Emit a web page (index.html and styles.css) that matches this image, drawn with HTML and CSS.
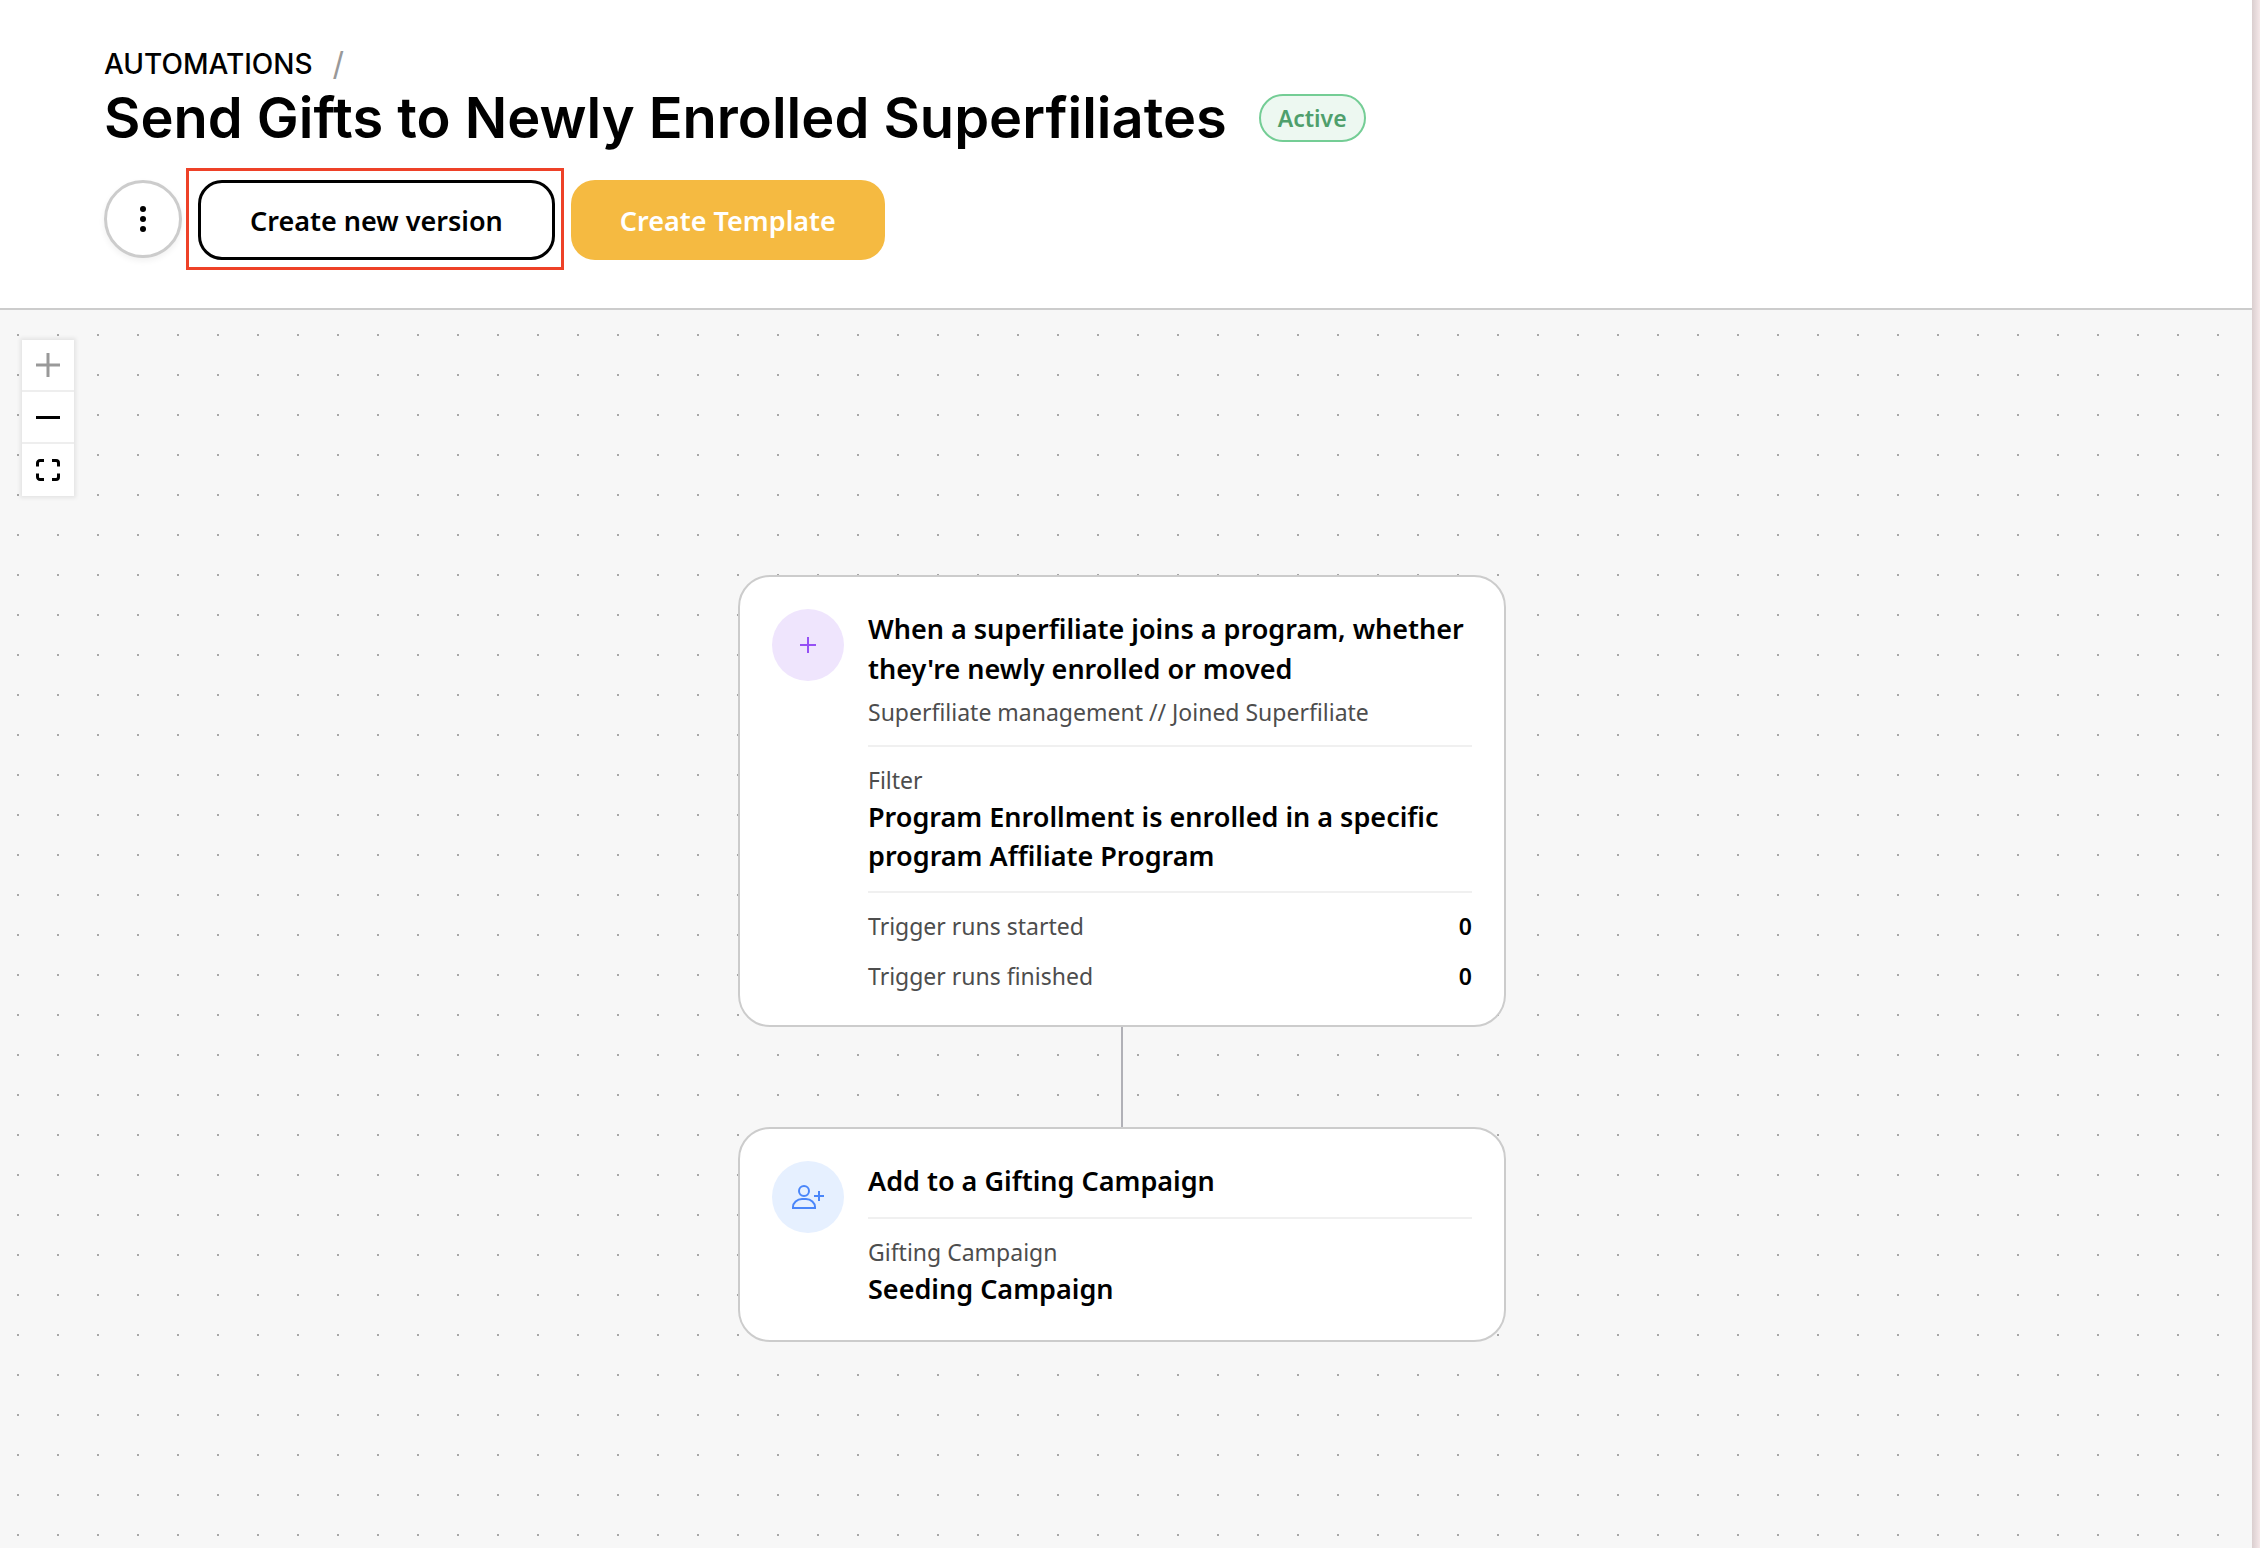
FILE: index.html
```
<!DOCTYPE html>
<html lang="en">
  <head>
    <meta charset="UTF-8" />
    <meta name="viewport" content="width=device-width, initial-scale=1" />
    <title>Send Gifts to Newly Enrolled Superfiliates</title>
    <link rel="stylesheet" href="styles.css">
  </head>
  <body>
    <div class="page">
      <header class="header">
        <nav class="breadcrumb" aria-label="Breadcrumb">
          <a href="#">AUTOMATIONS</a>
          <span class="slash">/</span>
        </nav>
        <div class="title-row">
          <h1>Send Gifts to Newly Enrolled Superfiliates</h1>
          <span class="status">Active</span>
        </div>
        <div class="actions">
          <button type="button" class="more-button" aria-label="More options">
            <svg width="6" height="26" viewBox="0 0 6 26">
              <circle cx="3" cy="3" r="3" />
              <circle cx="3" cy="13" r="3" />
              <circle cx="3" cy="23" r="3" />
            </svg>
          </button>
          <div class="highlight">
            <button type="button" class="button outline">Create new version</button>
          </div>
          <button type="button" class="button primary">Create Template</button>
        </div>
      </header>

      <main class="canvas">
        <!-- Zoom controls -->
        <div class="controls">
          <button type="button" aria-label="Zoom in" disabled>
            <svg width="24" height="24" viewBox="0 0 24 24" stroke-width="3">
              <path d="M12 0v24M0 12h24" />
            </svg>
          </button>
          <button type="button" aria-label="Zoom out">
            <svg width="24" height="24" viewBox="0 0 24 24" stroke-width="3">
              <path d="M0 12.5h24" />
            </svg>
          </button>
          <button type="button" aria-label="Fit view">
            <svg width="24" height="24" viewBox="0 0 24 24" stroke-width="3">
              <path d="M1.5 8.5V5A2.5 2.5 0 0 1 4 2.5h4M16 2.5h4A2.5 2.5 0 0 1 22.5 5v3.5M22.5 15.500V19a2.5 2.5 0 0 1-2.5 2.5h-4M8 21.5H4A2.5 2.5 0 0 1 1.5 19v-3.5" />
            </svg>
          </button>
        </div>

        <div class="flow">
          <article class="card">
            <div class="card-icon trigger">
              <svg width="16" height="16" viewBox="0 0 16 16">
                <path d="M8 0v16M0 8h16" />
              </svg>
            </div>
            <div class="card-body">
              <h2>When a superfiliate joins a program, whether they're newly enrolled or moved</h2>
              <p class="subtitle">Superfiliate management // Joined Superfiliate</p>
              <section>
                <p class="label">Filter</p>
                <p class="value">Program Enrollment is enrolled in a specific program Affiliate Program</p>
              </section>
              <section class="stats">
                <div class="stat"><span>Trigger runs started</span><strong>0</strong></div>
                <div class="stat"><span>Trigger runs finished</span><strong>0</strong></div>
              </section>
            </div>
          </article>

          <div class="connector"></div>

          <article class="card">
            <div class="card-icon action">
              <svg width="36" height="36" viewBox="0 0 36 36">
                <circle cx="14" cy="12" r="5" />
                <path d="M3 28v1h22v-1c0-4-4-8-9-8h-4c-5 0-9 4-9 8zM29 12v10M24 17h10" />
              </svg>
            </div>
            <div class="card-body">
              <h2>Add to a Gifting Campaign</h2>
              <section>
                <p class="label">Gifting Campaign</p>
                <p class="value">Seeding Campaign</p>
              </section>
            </div>
          </article>
        </div>
      </main>
    </div>
  </body>
</html>
```
FILE: styles.css
```
* {
  box-sizing: border-box;
}

body {
  margin: 0;
  padding-right: 8px;
  min-height: 100vh;
  font-family: "Noto Sans", "Open Sans", sans-serif;
  color: #000;
  background: linear-gradient(to left, #f5e8e9, #dacecf 8px);
}

h1,
h2,
p {
  margin: 0;
}

button {
  font-family: inherit;
  cursor: pointer;
}

.page {
  display: flex;
  flex-direction: column;
  min-height: 100vh;
}

/* Header */
.header {
  padding: 48px 104px;
  background: #fff;
  border-bottom: 2px solid #ccc;
}

.breadcrumb {
  display: flex;
  gap: 20px;
  font-family: Inter, sans-serif;
  font-size: 28px;
  font-weight: 500;
  line-height: 32px;
}

.breadcrumb a {
  color: #000;
  text-decoration: none;
}

.slash {
  color: #999;
  font-size: 32px;
  font-weight: 400;
}

.title-row {
  display: flex;
  align-items: center;
  gap: 32px;
  margin-top: 4px;
}

h1 {
  font-family: Inter, sans-serif;
  font-size: 56px;
  font-weight: 600;
  line-height: 68px;
}

.status {
  padding: 0 17px;
  border: 2px solid #74cd95;
  border-radius: 24px;
  background: #edf8f1;
  color: #4f9f6c;
  font-size: 23px;
  font-weight: 600;
  line-height: 44px;
}

.actions {
  display: flex;
  align-items: flex-start;
  gap: 16px;
  margin-top: 28px;
}

.more-button {
  display: flex;
  align-items: center;
  justify-content: center;
  width: 78px;
  height: 78px;
  padding: 0;
  border: 3px solid #ccc;
  border-radius: 50%;
  background: #fff;
  box-shadow: 0 3px 6px rgba(0, 0, 0, 0.06);
}

.button {
  height: 80px;
  padding: 0 49px;
  border-radius: 24px;
  font-size: 27px;
  font-weight: 600;
}

.outline {
  border: 3px solid #000;
  background: #fff;
  color: #000;
}

.primary {
  border: none;
  background: #f5ba41;
  color: #fff;
}

.highlight {
  position: relative;
}

.highlight::after {
  content: "";
  position: absolute;
  inset: -12px -9px -10px -12px;
  border: 3px solid #ee4128;
  pointer-events: none;
}

/* Canvas */
.canvas {
  position: relative;
  flex: 1;
  background: #f7f7f7 conic-gradient(from 270deg at 2px 2px, #a8a8a8 90deg, transparent 0) 17px 24px / 40px 40px;
}

.controls {
  position: absolute;
  top: 30px;
  left: 22px;
  width: 52px;
  box-shadow: 0 0 4px 2px rgba(0, 0, 0, 0.08);
}

.controls button {
  display: flex;
  align-items: center;
  justify-content: center;
  width: 100%;
  height: 52px;
  padding: 0;
  border: none;
  border-bottom: 2px solid #eee;
  background: #fff;
}

.controls button:last-child {
  border-bottom: none;
}

.controls svg {
  fill: none;
  stroke: #000;
}

.controls button:disabled svg {
  stroke: #999;
}

.flow {
  display: flex;
  flex-direction: column;
  align-items: center;
  padding: 265px 8px 64px 0;
}

.card {
  display: flex;
  align-items: flex-start;
  gap: 24px;
  width: 768px;
  padding: 32px;
  border: 2px solid #ccc;
  border-radius: 32px;
  background: #fff;
}

.card-icon {
  display: flex;
  flex-shrink: 0;
  align-items: center;
  justify-content: center;
  width: 72px;
  height: 72px;
  border-radius: 50%;
}

.card-icon svg {
  fill: none;
  stroke-width: 2;
}

.trigger {
  background: #efe5fd;
}

.trigger svg {
  stroke: #9650f5;
}

.action {
  background: #e6f0ff;
}

.action svg {
  stroke: #4a86fa;
}

.card-body {
  flex: 1;
}

h2 {
  font-size: 27px;
  font-weight: 600;
  line-height: 40px;
}

.subtitle,
.label,
.stat {
  color: #4d4d4d;
  font-size: 23px;
  line-height: 34px;
}

.subtitle {
  margin-top: 6px;
}

section {
  margin-top: 16px;
  padding-top: 16px;
  border-top: 2px solid #f0f0f0;
}

.value {
  font-size: 27px;
  font-weight: 600;
  line-height: 39px;
}

.stats {
  display: flex;
  flex-direction: column;
  gap: 16px;
}

.stat {
  display: flex;
  justify-content: space-between;
}

.stat strong {
  color: #000;
  font-weight: 600;
}

.connector {
  width: 2px;
  height: 100px;
  background: #b1b1b7;
}
```
